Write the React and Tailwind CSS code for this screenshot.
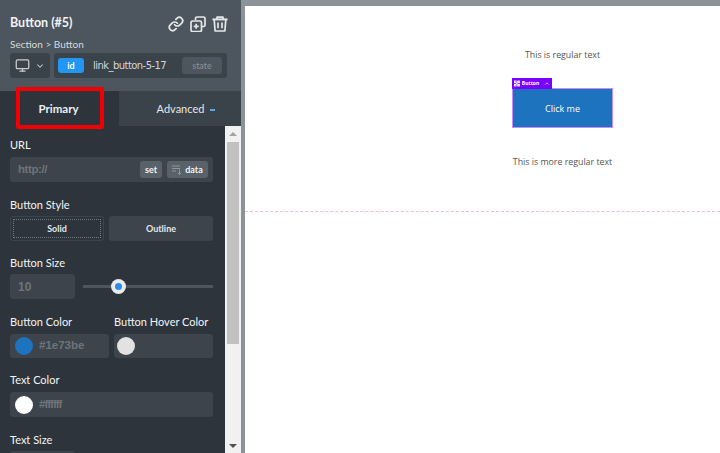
import React from 'react';
import { Monitor, ChevronDown, ChevronUp, Link } from 'lucide-react';

function Label({ children }) {
  return <div className="text-[11px] h-[15px] leading-[13px] whitespace-nowrap text-[#f2f4f5]">{children}</div>;
}

function ColorField({ color, value, className, textClass }) {
  return (
    <div className={`rounded-[3px] bg-[#3d444c] flex items-center gap-[6px] ${className}`}>
      <span className="w-[18px] h-[18px] rounded-full shrink-0" style={{ background: color }} />
      <span className={`text-[11.5px] font-bold text-[#6d747b] font-['Liberation_Sans',sans-serif] ${textClass}`}>{value}</span>
    </div>
  );
}

function CopyIcon() {
  return (
    <svg width="16" height="16" viewBox="0 0 16 16" fill="none" stroke="currentColor" strokeWidth="1.7" strokeLinejoin="round">
      <path d="M5.5 4V2.5a1.5 1.5 0 0 1 1.5-1.5h6.5A1.5 1.5 0 0 1 15 2.5V9a1.5 1.5 0 0 1-1.5 1.5H12" />
      <rect x="1" y="5" width="10.5" height="10.5" rx="1.6" />
      <path d="M6.2 7.8v5M3.7 10.3h5" />
    </svg>
  );
}

function TrashIcon() {
  return (
    <svg width="16" height="16" viewBox="0 0 16 16" fill="none" stroke="currentColor" strokeWidth="1.7" strokeLinejoin="round">
      <path d="M0.5 3.4h15" strokeWidth="2" />
      <path d="M5 3V1.2h6V3" />
      <path d="M2.2 3.6l.9 11.4h9.8l.9-11.4" />
      <path d="M6 6.5v5.8M10 6.5v5.8" />
    </svg>
  );
}

function DataIcon() {
  return (
    <svg width="11" height="10" viewBox="0 0 11 10" fill="none" stroke="#8f969c" strokeWidth="1">
      <path d="M0 1h8M0 3.5h8M0 6h4" />
      <path d="M7.5 4.5v5M5.8 7.8l1.7 1.7 1.7-1.7" />
    </svg>
  );
}

function DragIcon() {
  return (
    <svg width="7" height="7" viewBox="0 0 7 7" fill="none" stroke="white" strokeWidth="1.1">
      <rect x="0.5" y="0.5" width="2" height="2" />
      <rect x="4.5" y="0.5" width="2" height="2" />
      <rect x="0.5" y="4.5" width="2" height="2" />
      <rect x="4.5" y="4.5" width="2" height="2" />
      <path d="M2.5 2.5l2 2M4.5 2.5l-2 2" />
    </svg>
  );
}

export default function App() {
  return (
    <div className="w-[720px] h-[453px] overflow-hidden flex bg-[#8b9298] font-['Lato',sans-serif]">
      {/* sidebar */}
      <div className="w-[241px] h-full flex flex-col bg-[#2d343b] shrink-0">
        <div className="h-[91px] bg-[#4d565e] pl-[10px] pr-[13px] pt-[15px] shrink-0">
          <div className="flex items-center justify-between h-[17px]">
            <span className="text-[12.5px] font-bold text-[#f1f3f4]">Button (#5)</span>
            <div className="flex items-center gap-[6px] text-[#e4e7e9]">
              <Link size={16} strokeWidth={2.6} />
              <CopyIcon />
              <TrashIcon />
            </div>
          </div>
          <div className="text-[10px] leading-3 mt-[6px] text-[#d5d9dc]">Section &gt; Button</div>
          <div className="flex gap-1 mt-[3px]">
            <div className="w-10 h-[25px] rounded-[3px] bg-[#3a424a] flex items-center justify-center gap-[5px] text-[#c9ced2]">
              <Monitor size={15} strokeWidth={2} />
              <ChevronDown size={10} strokeWidth={2.5} />
            </div>
            <div className="w-[173px] h-[25px] rounded-[3px] bg-[#3a424a] flex items-center pl-1 pr-[5px]">
              <span className="w-[26px] h-[15px] rounded-[3px] bg-[#2196f3] text-white text-[9px] font-bold flex items-center justify-center">id</span>
              <span className="ml-[9px] text-[10px] text-[#d2d6d9] font-['DejaVu_Sans',sans-serif] tracking-[-0.55px]">link_button-5-17</span>
              <span className="ml-auto w-10 h-[17px] rounded-[3px] bg-[#4d565e] text-[9px] text-[#8b9298] flex items-center justify-center">state</span>
            </div>
          </div>
        </div>

        <div className="h-[35px] flex shrink-0 relative">
          <div className="w-[119px] bg-[#2d343b] flex items-center justify-center pr-[2px] text-[11.5px] font-bold text-[#eef0f2]">Primary</div>
          <div className="flex-1 bg-[#3a424a] flex items-center justify-center gap-[6px] pl-[12px] pt-[2px] text-[11px] text-[#e4e7e9]">
            Advanced <span className="w-[5px] h-[2px] bg-[#5aa5e6]" />
          </div>
          <div className="absolute left-[16px] top-[-4px] w-[88px] h-[42px] border-[4px] border-[#f00000] rounded-[2px]" />
        </div>

        <div className="flex-1 min-h-0 flex">
          <div className="w-[225px] pl-[10px] pr-3 pt-3 overflow-hidden">
            <Label>URL</Label>
            <div className="mt-1 h-[25px] rounded-[3px] bg-[#3d444c] flex items-center pl-2 pr-[5px] gap-[5px]">
              <span className="text-[11.5px] tracking-[-0.4px] text-[#6d747b] font-bold font-['Liberation_Sans',sans-serif] mr-auto">http://</span>
              <span className="w-[22px] h-[17px] rounded-[3px] bg-[#59626a] text-[9px] font-bold text-[#f1f3f4] flex items-center justify-center">set</span>
              <span className="w-[41px] h-[17px] rounded-[3px] bg-[#59626a] text-[9px] font-bold text-[#f1f3f4] flex items-center justify-center gap-[2px]">
                <DataIcon /> data
              </span>
            </div>

            <div className="mt-4"><Label>Button Style</Label></div>
            <div className="mt-[3px] flex gap-[5px] h-[25px]">
              <div className="w-[94px] rounded-[3px] bg-[#2d343b] border border-[#3d444c] p-[2px]">
                <div className="h-full border border-dotted border-[#737a81] flex items-center justify-center text-[9px] font-bold text-[#e4e7e9]">Solid</div>
              </div>
              <div className="w-[104px] rounded-[3px] bg-[#3d444c] flex items-center justify-center text-[9px] font-bold text-[#e4e7e9]">Outline</div>
            </div>

            <div className="mt-[15px]"><Label>Button Size</Label></div>
            <div className="mt-[3px] flex items-center">
              <div className="w-[65px] h-[25px] rounded-[3px] bg-[#3d444c] pl-2 flex items-center text-[12px] font-bold text-[#6d747b] font-['Liberation_Sans',sans-serif]">10</div>
              <div className="relative ml-2 w-[130px] h-[3px] bg-[#4d565e]">
                <span className="absolute left-[28px] top-[-6px] w-[15px] h-[15px] rounded-full bg-[#e9ebec] flex items-center justify-center">
                  <span className="w-[7px] h-[7px] rounded-full bg-[#2f8be6]" />
                </span>
              </div>
            </div>

            <div className="mt-4 flex gap-[5px]">
              <div className="w-[99px]"><Label>Button Color</Label></div>
              <Label>Button Hover Color</Label>
            </div>
            <div className="mt-1 flex gap-[5px]">
              <ColorField color="#1e73be" value="#1e73be" className="w-[99px] h-6 pl-[5px]" />
              <ColorField color="#e2e2e2" value="" className="w-[99px] h-6 pl-[3px]" />
            </div>

            <div className="mt-[15px]"><Label>Text Color</Label></div>
            <div className="mt-1">
              <ColorField color="#ffffff" value="#ffffff" textClass="tracking-[-1px]" className="w-[203px] h-[25px] pl-[5px]" />
            </div>

            <div className="mt-4"><Label>Text Size</Label></div>
            <div className="mt-[3px] w-[65px] h-[25px] rounded-[3px] bg-[#3d444c]" />
          </div>

          {/* scrollbar */}
          <div className="w-[16px] bg-[#f1f1f1] flex flex-col items-center shrink-0">
            <div className="h-[16px] flex items-center justify-center">
              <span className="border-x-[4px] border-x-transparent border-b-[4px] border-b-[#a3a3a3]" />
            </div>
            <div className="w-[12px] h-[202px] bg-[#c1c1c1]" />
            <div className="mt-auto h-[15px] flex items-center justify-center">
              <span className="border-x-[4px] border-x-transparent border-t-[4px] border-t-[#505050]" />
            </div>
          </div>
        </div>
      </div>

      {/* canvas */}
      <div className="flex-1 ml-1 mt-[6px] bg-white font-['Open_Sans',sans-serif] text-[#555]">
        <div className="h-[206px] border-b border-dashed border-[#f5bcd0] flex flex-col items-center pl-[160px]">
          <div className="mt-[43px] text-[8.8px] leading-3 whitespace-nowrap">This is regular text</div>
          <div className="relative mt-[27px] w-[101px] h-[40px] pt-px bg-[#1e73be] border border-[#c58cff] flex items-center justify-center text-[9px] text-white">
            Click me
            <div className="absolute left-[-1px] top-[-11px] h-[11px] w-[40px] bg-[#7a00ff] flex items-center gap-[2px] px-[2px] text-[5px] font-bold leading-none">
              <DragIcon />
              Button
              <ChevronUp size={7} strokeWidth={3} className="ml-[3px]" />
            </div>
          </div>
          <div className="mt-[28px] text-[8.8px] leading-3 whitespace-nowrap">This is more regular text</div>
        </div>
      </div>
    </div>
  );
}
